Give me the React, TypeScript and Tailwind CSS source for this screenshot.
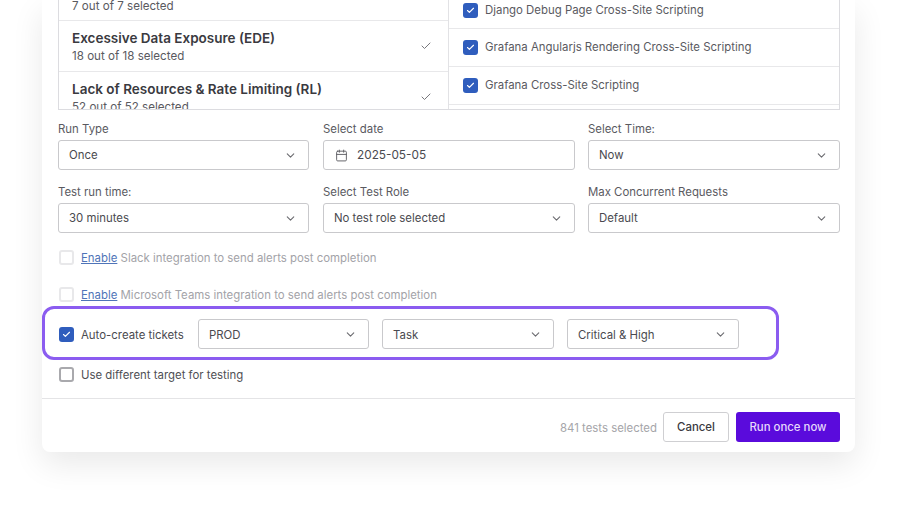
import React from 'react';
import { Calendar, Check, ChevronDown } from 'lucide-react';

const font = { fontFamily: 'Inter, sans-serif' };

const categories = [
    { title: '', sub: '7 out of 7 selected', cls: 'h-[21px] items-end pb-[5px]' },
    { title: 'Excessive Data Exposure (EDE)', sub: '18 out of 18 selected', cls: 'h-[51px] items-center pt-[2px]' },
    { title: 'Lack of Resources & Rate Limiting (RL)', sub: '52 out of 52 selected', cls: 'h-[51px] items-center pt-[2px]' },
];

const tests = ['Django Debug Page Cross-Site Scripting', 'Grafana Angularjs Rendering Cross-Site Scripting', 'Grafana Cross-Site Scripting'];

// checkbox, checked = blue
function Box({ checked, faded }: { checked?: boolean; faded?: boolean }) {
    if (checked) {
        return (
            <span className="flex h-[15px] w-[15px] shrink-0 items-center justify-center rounded-[3px] bg-[#2f5dbd]">
                <Check size={9} strokeWidth={3} className="text-white" />
            </span>
        );
    }
    return <span className={`h-[15px] w-[15px] shrink-0 rounded-[3px] border-2 ${faded ? 'border-[#e8e8ea]' : 'border-[#a9a9ad]'}`} />;
}

function Select({ value, className }: { value: string; className?: string }) {
    return (
        <div className={`flex h-[30px] items-center justify-between rounded-[3px] border border-[#c9c9cc] bg-white pl-[10px] pr-[11px] text-[11.4px] text-[#4a4a4f] ${className ?? ''}`}>
            <span className="mt-[2px]">{value}</span>
            <ChevronDown size={13} strokeWidth={2} className="text-[#6b6b70]" />
        </div>
    );
}

function Field({ label, className, children }: { label: string; className?: string; children: React.ReactNode }) {
    return (
        <div className={className}>
            <div className="flex h-[20px] items-start pt-[1px] text-[11.4px] leading-[16px] text-[#5a5a5f]">{label}</div>
            {children}
        </div>
    );
}

function IntegrationRow({ name }: { name: string }) {
    return (
        <div className="flex h-[20px] items-center gap-[7px] pl-[1px] text-[11.4px] text-[#a3a3a8]">
            <Box faded />
            <span className="mt-[3px]">
                <span className="text-[#4f74b8] underline">Enable</span> {name} integration to send alerts post completion
            </span>
        </div>
    );
}

export default function App() {
    return (
        <div className="h-[515px] w-[898px] overflow-hidden bg-white pl-[42px]" style={font}>
            <div className="h-[452px] w-[813px] rounded-b-lg bg-white shadow-[0_12px_32px_rgba(0,0,0,0.09)]">
                <div className="h-[399px] border-b border-[#e4e4e6] pl-[16px] pr-[15px]">
                    {/* lists */}
                    <div className="flex h-[110px] overflow-hidden border-x border-b border-[#dcdce0]">
                        <div className="w-[390px] shrink-0 border-r border-[#e2e2e5]">
                            {categories.map((c, i) => (
                                <div key={i} className={`flex justify-between border-b border-[#e8e8ea] pl-[13px] pr-[16px] ${c.cls}`}>
                                    <div>
                                        {c.title && <div className="text-[13.5px] leading-[18px] font-semibold text-[#3a3a3f]">{c.title}</div>}
                                        <div className="text-[11.6px] leading-[18px] text-[#5a5a5f]">{c.sub}</div>
                                    </div>
                                    {c.title && <Check size={12} strokeWidth={2} className="-mt-[2px] self-center text-[#77777c]" />}
                                </div>
                            ))}
                        </div>
                        <div className="flex-1">
                            {tests.map((t, i) => (
                                <div key={t} className={`flex items-center gap-[7px] border-b border-[#e8e8ea] pl-[14px] text-[11.4px] text-[#5a5a5f] ${i === 0 ? 'h-[29px] pb-[7px]' : 'h-[38px]'}`}>
                                    <Box checked />
                                    <span className="mt-[1px]">{t}</span>
                                </div>
                            ))}
                        </div>
                    </div>

                    {/* form */}
                    <div className="mt-[10px] grid grid-cols-[251px_252px_251px] gap-x-[14px] gap-y-[13px]">
                        <Field label="Run Type"><Select value="Once" /></Field>
                        <Field label="Select date">
                            <div className="flex h-[30px] items-center gap-[9px] rounded-[3px] border border-[#c9c9cc] pl-[11px] text-[11.8px] text-[#4a4a4f]">
                                <Calendar size={13} strokeWidth={1.75} className="text-[#5f5f64]" />
                                <span className="mt-[2px]">2025-05-05</span>
                            </div>
                        </Field>
                        <Field label="Select Time:" className="-ml-px"><Select value="Now" /></Field>
                        <Field label="Test run time:"><Select value="30 minutes" /></Field>
                        <Field label="Select Test Role"><Select value="No test role selected" /></Field>
                        <Field label="Max Concurrent Requests" className="-ml-px"><Select value="Default" /></Field>
                    </div>

                    <div className="mt-[14px] flex flex-col gap-[17px]">
                        <IntegrationRow name="Slack" />
                        <IntegrationRow name="Microsoft Teams" />
                    </div>

                    {/* highlighted row */}
                    <div className="mt-[2px] -ml-[16px] flex h-[54px] w-[737px] items-center rounded-[12px] border-[3px] border-[#8b5cf0] pt-[2px] pl-[14px] text-[11.4px] text-[#4a4a4f]">
                        <Box checked />
                        <span className="ml-[7px] mr-[13px] mt-[3px] w-[104px]">Auto-create tickets</span>
                        <div className="flex gap-[13px] [&_span]:mt-[4px]">
                            <Select value="PROD" className="w-[171px]" />
                            <Select value="Task" className="w-[172px]" />
                            <Select value="Critical & High" className="w-[172px]" />
                        </div>
                    </div>

                    <div className="mt-[4px] flex h-[20px] items-center gap-[7px] pl-[1px] text-[11.4px] text-[#4f4f54]">
                        <Box />
                        <span className="mt-[3px]">Use different target for testing</span>
                    </div>
                </div>

                {/* footer */}
                <div className="flex items-center justify-end pt-[13px] pr-[15px] text-[11.4px]">
                    <span className="mr-[6px] mt-[3px] text-[#a5a5a9]">841 tests selected</span>
                    <button className="h-[30px] w-[66px] rounded-[3px] border border-[#cfcfd2] pt-[2px] font-medium text-[#3a3a3f]">Cancel</button>
                    <button className="ml-[7px] h-[30px] w-[104px] rounded-[3px] bg-[#5a0bdc] pt-[2px] font-medium text-[#e6d9fb]">Run once now</button>
                </div>
            </div>
        </div>
    );
}
